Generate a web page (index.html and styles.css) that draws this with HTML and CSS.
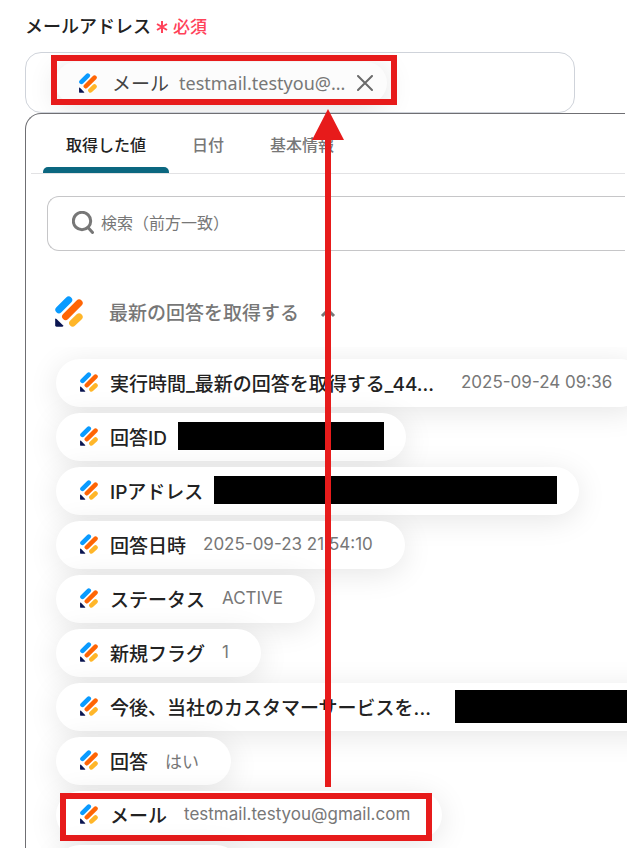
FILE: index.html
```html
<!DOCTYPE html>
<html lang="ja">
<head>
  <meta charset="utf-8">
  <title>メールアドレス</title>
  <link rel="stylesheet" href="styles.css">
</head>
<body>
  <svg class="defs" aria-hidden="true">
    <symbol id="logo" viewBox="0 0 82 92">
      <g fill="none" stroke-width="21" stroke-linecap="round">
        <path stroke="#0a9bff" d="M11 41 L40 12"/>
        <path stroke="#ff6505" d="M31 61 L71 21"/>
        <path stroke="#ffb629" d="M52 80 L71 62"/>
      </g>
      <path fill="#0a1551" d="M0 69 Q0 65 4 68 L23 87 Q26 91 21 91 L4 91 Q0 91 0 87 Z"/>
    </symbol>
  </svg>

  <div class="page">
    <div class="label">メールアドレス
      <span class="required">
        <svg class="asterisk" viewBox="0 0 12 12"><path d="M6 0 V12 M1 3 L11 9 M11 3 L1 9"/></svg>
        必須
      </span>
    </div>

    <div class="field">
      <div class="tag">
        <svg class="logo"><use href="#logo"/></svg>
        <span class="tag-title">メール</span>
        <span class="tag-value">testmail.testyou@...</span>
        <button class="tag-close" type="button" aria-label="削除">
          <svg viewBox="0 0 16 16"><path d="M1 1 L15 15 M15 1 L1 15"/></svg>
        </button>
      </div>
      <div class="highlight highlight-tag"></div>
    </div>

    <div class="panel">
      <div class="tabs">
        <button class="tab active" type="button">取得した値</button>
        <button class="tab" type="button">日付</button>
        <button class="tab" type="button">基本情報</button>
      </div>

      <div class="search">
        <svg class="search-icon" viewBox="0 0 22 23"><circle cx="10" cy="10" r="8.7"/><path d="M16 16.5 L20.5 21.5"/></svg>
        <input class="search-input" type="text" placeholder="検索（前方一致）" aria-label="検索（前方一致）">
      </div>

      <button class="group" type="button">
        <svg class="group-logo"><use href="#logo"/></svg>
        <span>最新の回答を取得する</span>
        <svg class="chevron" viewBox="0 0 16 10"><path d="M2 8 L8 2 L14 8"/></svg>
      </button>

      <div class="list">
        <button class="chip" type="button">
          <svg class="logo"><use href="#logo"/></svg>
          <span class="chip-title long">実行時間_最新の回答を取得する_44...</span>
          <span class="chip-value">2025-09-24 09:36</span>
        </button>
        <button class="chip masked" type="button">
          <svg class="logo"><use href="#logo"/></svg>
          <span class="chip-title">回答ID</span>
          <span class="mask mask-id"></span>
        </button>
        <button class="chip masked" type="button">
          <svg class="logo"><use href="#logo"/></svg>
          <span class="chip-title">IPアドレス</span>
          <span class="mask mask-ip"></span>
        </button>
        <button class="chip" type="button">
          <svg class="logo"><use href="#logo"/></svg>
          <span class="chip-title">回答日時</span>
          <span class="chip-value">2025-09-23 21:54:10</span>
        </button>
        <button class="chip" type="button">
          <svg class="logo"><use href="#logo"/></svg>
          <span class="chip-title">ステータス</span>
          <span class="chip-value">ACTIVE</span>
        </button>
        <button class="chip" type="button">
          <svg class="logo"><use href="#logo"/></svg>
          <span class="chip-title">新規フラグ</span>
          <span class="chip-value">1</span>
        </button>
        <button class="chip masked" type="button">
          <svg class="logo"><use href="#logo"/></svg>
          <span class="chip-title long">今後、当社のカスタマーサービスを...</span>
          <span class="mask mask-answer"></span>
        </button>
        <button class="chip" type="button">
          <svg class="logo"><use href="#logo"/></svg>
          <span class="chip-title">回答</span>
          <span class="chip-value">はい</span>
        </button>
        <button class="chip" type="button">
          <svg class="logo"><use href="#logo"/></svg>
          <span class="chip-title">メール</span>
          <span class="chip-value">testmail.testyou@gmail.com</span>
          <span class="highlight highlight-chip"></span>
        </button>
        <div class="chip chip-next"></div>
      </div>
    </div>

    <!-- arrow from the list item up to the field -->
    <svg class="arrow" viewBox="0 0 32 678" aria-hidden="true">
      <path d="M16 0 L32 31 H19 V678 H13 V31 H0 Z"/>
    </svg>
  </div>
</body>
</html>
```

FILE: styles.css
```css
* {
  box-sizing: border-box;
}

body {
  margin: 0;
  background-color: #fff;
  color: #222;
  font-family: Inter, "Noto Sans CJK JP", sans-serif;
}

button {
  margin: 0;
  padding: 0;
  border: none;
  background: none;
  color: inherit;
  font-family: inherit;
  cursor: pointer;
}

svg {
  flex-shrink: 0;
}

.defs {
  display: none;
}

.page {
  position: relative;
  height: 100vh;
  overflow: hidden;
  padding: 13px 3px 0 25px;
}

.label {
  display: flex;
  align-items: center;
  gap: 5px;
  height: 24px;
  margin-bottom: 15px;
  font-size: 18px;
  font-weight: 500;
}

.required {
  display: flex;
  align-items: center;
  gap: 5px;
  color: #ff4259;
  font-size: 17px;
}

.asterisk {
  width: 12px;
  height: 12px;
  margin-top: 4px;
  stroke: #ff4259;
  stroke-width: 2;
}

/* Input field with the selected value */
.field {
  position: relative;
  display: flex;
  align-items: center;
  max-width: 550px;
  height: 61px;
  padding-left: 29px;
  border: 1px solid #cfd3da;
  border-radius: 16px;
  overflow: hidden;
}

.tag {
  display: flex;
  align-items: center;
  height: 42px;
  padding: 0 14px 0 24px;
  border-radius: 21px;
  background-color: #fcfcfc;
  box-shadow: 0 5px 30px rgba(0, 0, 0, 0.12);
}

.logo {
  width: 18px;
  height: 20px;
}

.tag-title {
  margin: 0 10px 0 15px;
  color: #444;
  font-size: 19px;
}

.tag-value {
  color: #777;
  font-family: "Noto Sans", "Noto Sans CJK JP", sans-serif;
  font-size: 18px;
}

.tag-close {
  display: flex;
  margin-left: 12px;
}

.tag-close svg {
  width: 16px;
  height: 16px;
  fill: none;
  stroke: #6b6b6b;
  stroke-width: 2;
  stroke-linecap: round;
}

/* Dropdown panel */
.panel {
  border-top: 1px solid #6f6f73;
  border-left: 1px solid #6f6f73;
  border-top-left-radius: 16px;
}

.tabs {
  display: flex;
  height: 60px;
  margin-left: 5px;
  padding-left: 12px;
  border-bottom: 1px solid #e2e2e4;
}

.tab {
  padding: 6px 23px 0;
  border-bottom: 6px solid transparent;
  color: #777;
  font-size: 16px;
  font-weight: 500;
}

.tab.active {
  position: relative;
  color: #222;
}

.tab.active::after {
  content: "";
  position: absolute;
  left: 0;
  right: 0;
  bottom: -6px;
  height: 6px;
  border-radius: 5px 5px 0 0;
  background-color: #0b6780;
}

.search {
  display: flex;
  align-items: center;
  gap: 7px;
  height: 55px;
  margin: 22px 0 0 21px;
  padding: 0 0 2px 24px;
  border: 1px solid #c6c6c8;
  border-right: none;
  border-radius: 12px 0 0 12px;
}

.search-icon {
  width: 22px;
  height: 23px;
  fill: none;
  stroke: #777;
  stroke-width: 3;
  stroke-linecap: round;
}

.search-input {
  flex-grow: 1;
  min-width: 0;
  padding: 0;
  border: none;
  outline: none;
  background: none;
  font-family: inherit;
  font-size: 16px;
}

.search-input::placeholder {
  color: #777;
}

.group {
  display: flex;
  align-items: center;
  height: 32px;
  margin: 44px 0 0 29px;
  color: #777;
  font-size: 19px;
  font-weight: 500;
}

.group-logo {
  width: 28px;
  height: 31px;
  margin-right: 26px;
}

.chevron {
  width: 16px;
  height: 10px;
  margin: 4px 0 0 21px;
  fill: none;
  stroke: #777;
  stroke-width: 3;
}

.list {
  display: flex;
  flex-direction: column;
  align-items: flex-start;
  gap: 6px;
  margin: 20px -2px 0 0;
  padding: 12px 0 40px 30px;
  overflow: hidden;
}

.chip {
  position: relative;
  display: flex;
  flex-shrink: 0;
  align-items: center;
  height: 48px;
  padding: 0 32px 2px 24px;
  border-radius: 24px;
  background-color: #fff;
  box-shadow: 0 5px 30px rgba(0, 0, 0, 0.1);
  white-space: nowrap;
}

.chip.masked {
  padding-right: 22px;
}

.chip-title {
  margin-left: 12px;
  font-size: 19px;
  font-weight: 500;
}

.chip-title.long {
  width: 334px;
  text-align: left;
}

.chip-value {
  margin-left: 17px;
  color: #777;
  font-size: 17px;
}

.chip-next {
  width: 184px;
}

.mask {
  height: 28px;
  margin-left: 11px;
  background-color: #000;
}

.mask-id {
  width: 206px;
}

.mask-ip {
  width: 343px;
}

.mask-answer {
  width: 240px;
  height: 33px;
}

/* Red annotations drawn over the form */
.highlight {
  position: absolute;
  border: 6px solid #e71b1b;
  pointer-events: none;
}

.highlight-tag {
  top: 2px;
  left: 25px;
  width: 346px;
  height: 50px;
}

.highlight-chip {
  top: 2px;
  left: 4px;
  right: 10px;
  height: 48px;
}

.arrow {
  position: absolute;
  top: 109px;
  left: 312px;
  width: 32px;
  height: 678px;
  fill: #e71b1b;
  pointer-events: none;
}
```
